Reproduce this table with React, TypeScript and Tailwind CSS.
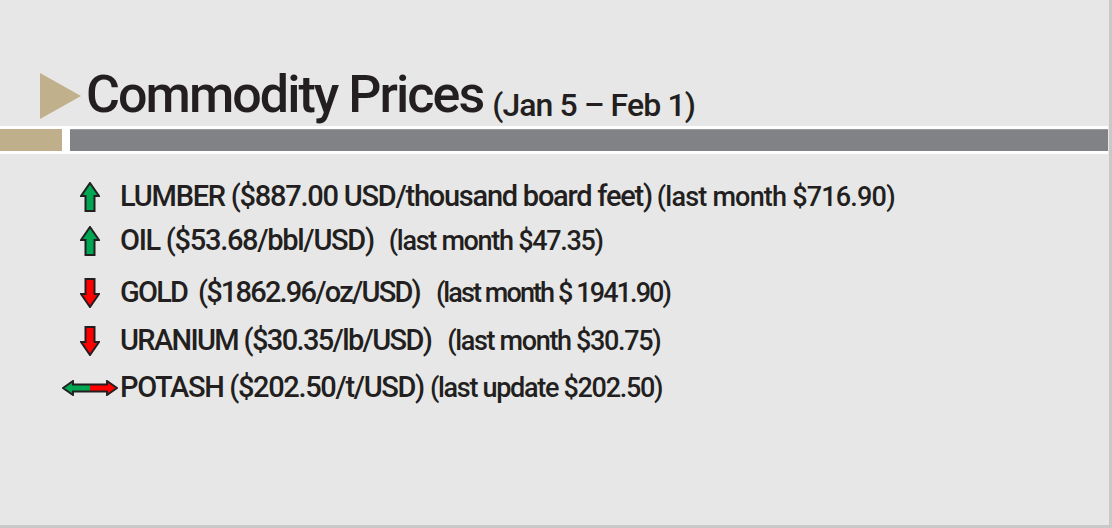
const font = { fontFamily: "Roboto, 'Liberation Sans', sans-serif" };

function UpArrow() {
  return (
    <svg width="20" height="30" viewBox="0 0 20 30">
      <polygon
        points="10,1 19,14 14.5,14 14.5,29 5.5,29 5.5,14 1,14"
        fill="#00a651"
        stroke="#231f20"
        strokeWidth="2"
        strokeLinejoin="miter"
      />
    </svg>
  );
}

function DownArrow() {
  return (
    <svg width="20" height="30" viewBox="0 0 20 30">
      <polygon
        points="5.5,1 14.5,1 14.5,16 19,16 10,29 1,16 5.5,16"
        fill="#ff0000"
        stroke="#231f20"
        strokeWidth="2"
        strokeLinejoin="miter"
      />
    </svg>
  );
}

function BothArrow() {
  return (
    <svg width="56" height="16" viewBox="0 0 56 16">
      <defs>
        <linearGradient id="split" x1="0" x2="1" y1="0" y2="0">
          <stop offset="0.5" stopColor="#00a651" />
          <stop offset="0.5" stopColor="#ff0000" />
        </linearGradient>
      </defs>
      <polygon
        points="1,8 11,1 11,4.5 45,4.5 45,1 55,8 45,15 45,11.5 11,11.5 11,15"
        fill="url(#split)"
        stroke="#231f20"
        strokeWidth="1.9"
      />
    </svg>
  );
}

type Row = {
  icon: "up" | "down" | "both";
  name: string;
  note: string;
  gap: string;
  mt: string;
  nameTrack: string;
  noteTrack: string;
};

const rows: Row[] = [
  { icon: "up", name: "LUMBER ($887.00 USD/thousand board feet)", note: "(last month $716.90)", gap: "ml-[5px]", mt: "mt-[28px]", nameTrack: "tracking-[-1.25px]", noteTrack: "tracking-[-0.8px]" },
  { icon: "up", name: "OIL ($53.68/bbl/USD)", note: "(last month $47.35)", gap: "ml-[15px]", mt: "mt-[14px]", nameTrack: "tracking-[-1.3px]", noteTrack: "tracking-[-1.3px]" },
  { icon: "down", name: "GOLD  ($1862.96/oz/USD)", note: "(last month $ 1941.90)", gap: "ml-[16px]", mt: "mt-[22px]", nameTrack: "tracking-[-1.8px]", noteTrack: "tracking-[-1.9px]" },
  { icon: "down", name: "URANIUM ($30.35/lb/USD)", note: "(last month $30.75)", gap: "ml-[16px]", mt: "mt-[18px]", nameTrack: "tracking-[-1.65px]", noteTrack: "tracking-[-1.35px]" },
  { icon: "both", name: "POTASH ($202.50/t/USD)", note: "(last update $202.50)", gap: "ml-[6px]", mt: "mt-[17px]", nameTrack: "tracking-[-1.35px]", noteTrack: "tracking-[-1.3px]" },
];

export default function App() {
  return (
    <div
      className="w-[1112px] h-[528px] bg-[#e7e7e7] border-r-[3px] border-b-[3px] border-[#c9c9c9] overflow-hidden text-[#231f20]"
      style={font}
    >
      {/* Title */}
      <div className="flex items-end h-[126px] pl-[40px] pb-[5px]">
        <svg width="41" height="46" viewBox="0 0 41 46" className="mb-[2px]">
          <polygon points="0,0 41,23 0,46" fill="#c0b18c" />
        </svg>
        <span className="ml-[5px] text-[52px] leading-[52px] font-medium tracking-[-1.95px]">
          Commodity Prices
        </span>
        <span className="ml-[9px] -mb-[4px] text-[32px] leading-[40px] font-medium tracking-[-0.9px]">
          (Jan 5 – Feb 1)
        </span>
      </div>

      {/* Rule bars */}
      <div className="w-[1108px] bg-white py-[3px] flex gap-[8px]">
        <div className="w-[62px] h-[22px] bg-[#bfb08b]" />
        <div className="flex-1 h-[22px] bg-[#818286] border-t border-[#9a9a9c]" />
      </div>

      {/* List */}
      <div className="pl-[62px]">
        {rows.map((r) => (
          <div key={r.name} className={`flex items-center h-[30px] ${r.mt}`}>
            <div className="w-[56px] flex justify-center">
              {r.icon === "up" && <UpArrow />}
              {r.icon === "down" && <DownArrow />}
              {r.icon === "both" && <BothArrow />}
            </div>
            <span className={`ml-[2px] whitespace-pre text-[29px] font-medium ${r.nameTrack}`}>
              {r.name}
            </span>
            <span className={`${r.gap} whitespace-pre text-[27px] font-medium ${r.noteTrack}`}>
              {r.note}
            </span>
          </div>
        ))}
      </div>
    </div>
  );
}
